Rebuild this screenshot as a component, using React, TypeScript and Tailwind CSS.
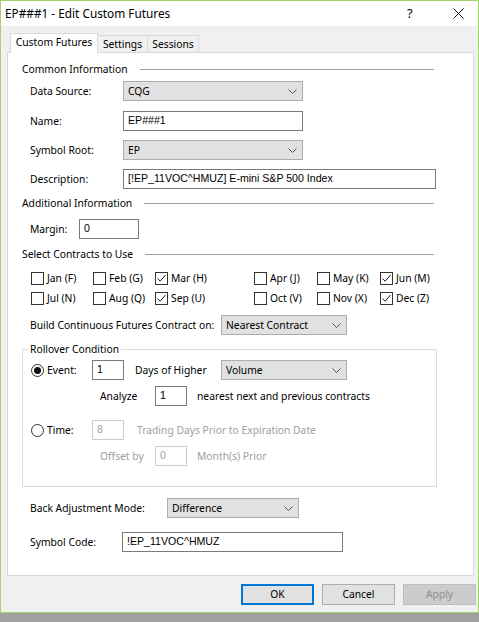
import React from 'react';

const ui = "font-['Noto_Sans','Open_Sans',sans-serif] text-[10.3px] text-[#000]";
const mono = "font-['Liberation_Sans','Arial',sans-serif] text-[10.6px]";

const Chevron = () => (
    <svg width="9" height="5" viewBox="0 0 9 5" className="mr-[5px] shrink-0">
        <path d="M0.5 0.5 L4.5 4.5 L8.5 0.5" fill="none" stroke="#555" strokeWidth="1" />
    </svg>
);

const Select = ({ w, value }: { w: number; value: string }) => (
    <div
        className="h-[20px] flex items-center justify-between border border-[#adadad] bg-[#e1e1e1] pl-[4px]"
        style={{ width: w }}
    >
        <span className="leading-none whitespace-nowrap">{value}</span>
        <Chevron />
    </div>
);

const TextBox = ({ w, value, disabled }: { w: number; value: string; disabled?: boolean }) => (
    <div
        className={`h-[20px] flex items-center pl-[4px] bg-white border whitespace-nowrap ${mono} ${
            disabled ? 'border-[#cccccc] text-[#a0a0a0]' : 'border-[#7a7a7a] text-black'
        }`}
        style={{ width: w }}
    >
        {value}
    </div>
);

const Check = ({ label, checked, w }: { label: string; checked?: boolean; w: number }) => (
    <div className="flex items-center h-[14px]" style={{ width: w }}>
        <div className="w-[13px] h-[13px] border border-[#333] bg-white flex items-center justify-center shrink-0">
            {checked && (
                <svg width="11" height="11" viewBox="0 0 11 11">
                    <path d="M1.5 5.5 L4.2 8.2 L9.5 2" fill="none" stroke="#222" strokeWidth="1" />
                </svg>
            )}
        </div>
        <span className="ml-[3px] leading-none whitespace-nowrap">{label}</span>
    </div>
);

const Radio = ({ label, checked }: { label: string; checked?: boolean }) => (
    <div className="flex items-center w-[61px]">
        <div className="w-[13px] h-[13px] rounded-full border border-[#333] bg-white flex items-center justify-center shrink-0">
            {checked && <div className="w-[7px] h-[7px] rounded-full bg-[#111]" />}
        </div>
        <span className="ml-[3px] leading-none">{label}</span>
    </div>
);

const Section = ({ title }: { title: string }) => (
    <div className="h-[18px] flex items-center ml-[14px] mr-[39px] gap-[12px]">
        <span className="leading-none whitespace-nowrap">{title}</span>
        <div className="flex-1 h-px bg-[#a0a0a0]" />
    </div>
);

const Field = ({ label, lw, children, mt }: { label: string; lw: number; children: React.ReactNode; mt: string }) => (
    <div className={`flex items-center ml-[22px] ${mt}`}>
        <span className="leading-none shrink-0 whitespace-nowrap" style={{ width: lw }}>{label}</span>
        {children}
    </div>
);

const Button = ({ label, primary, disabled }: { label: string; primary?: boolean; disabled?: boolean }) => (
    <div
        className={`w-[73px] h-[21px] flex items-center justify-center ${
            primary
                ? 'border-2 border-[#0078d7] bg-[#e1e1e1]'
                : disabled
                ? 'border border-[#bfbfbf] bg-[#cccccc] text-[#8c8c8c]'
                : 'border border-[#adadad] bg-[#e1e1e1]'
        }`}
    >
        {label}
    </div>
);

export default function App() {
    const row1 = [
        { l: 'Jan (F)', c: false, w: 62 },
        { l: 'Feb (G)', c: false, w: 62 },
        { l: 'Mar (H)', c: true, w: 99 },
        { l: 'Apr (J)', c: false, w: 63 },
        { l: 'May (K)', c: false, w: 63 },
        { l: 'Jun (M)', c: true, w: 70 },
    ];
    const row2 = [
        { l: 'Jul (N)', c: false, w: 62 },
        { l: 'Aug (Q)', c: false, w: 62 },
        { l: 'Sep (U)', c: true, w: 99 },
        { l: 'Oct (V)', c: false, w: 63 },
        { l: 'Nov (X)', c: false, w: 63 },
        { l: 'Dec (Z)', c: true, w: 70 },
    ];

    return (
        <div className={`w-[479px] h-[622px] bg-[#a0a0a0] flex flex-col ${ui}`}>
            <div className="h-[613px] border border-[#a6d26f] bg-[#f0f0f0] flex flex-col">
                {/* Title bar */}
                <div className="h-[25px] bg-white flex items-center pl-[4px] shrink-0 text-[11.8px]">
                    <span className="flex-1 leading-none">EP###1 - Edit Custom Futures</span>
                    <span className="w-[10px] text-[13px] leading-none mr-[36px]">?</span>
                    <svg width="11" height="11" viewBox="0 0 11 11" className="mr-[14px]">
                        <path d="M0.5 0.5 L10.5 10.5 M10.5 0.5 L0.5 10.5" stroke="#111" strokeWidth="1" />
                    </svg>
                </div>

                <div className="flex flex-col pl-[6px] pr-[4px] pt-[7px]">
                    {/* Tabs */}
                    <div className="flex items-end h-[19px] ml-[3px]">
                        <div className="relative z-10 w-[88px] h-[20px] -mb-px bg-white border-x border-t border-[#d9d9d9] flex items-center justify-center">
                            <span className="leading-none -mt-[2px]">Custom Futures</span>
                        </div>
                        <div className="w-[50px] h-[17px] bg-[#f0f0f0] border-r border-t border-[#d9d9d9] flex items-center justify-center">
                            <span className="leading-none">Settings</span>
                        </div>
                        <div className="w-[51px] h-[17px] bg-[#f0f0f0] border-r border-t border-[#d9d9d9] flex items-center justify-center">
                            <span className="leading-none">Sessions</span>
                        </div>
                    </div>

                    {/* Panel */}
                    <div className="w-[467px] h-[524px] bg-white border border-[#d9d9d9] flex flex-col">
                        <div className="mt-[7px]">
                            <Section title="Common Information" />
                        </div>
                        <Field label="Data Source:" lw={93} mt="mt-[3px]">
                            <Select w={180} value="CQG" />
                        </Field>
                        <Field label="Name:" lw={93} mt="mt-[10px]">
                            <TextBox w={180} value="EP###1" />
                        </Field>
                        <Field label="Symbol Root:" lw={93} mt="mt-[9px]">
                            <Select w={180} value="EP" />
                        </Field>
                        <Field label="Description:" lw={93} mt="mt-[9px]">
                            <TextBox w={313} value="[!EP_11VOC^HMUZ] E-mini S&P 500 Index" />
                        </Field>

                        <div className="mt-[5px]">
                            <Section title="Additional Information" />
                        </div>
                        <Field label="Margin:" lw={49} mt="mt-[7px]">
                            <TextBox w={60} value="0" />
                        </Field>

                        <div className="mt-[6px]">
                            <Section title="Select Contracts to Use" />
                        </div>
                        <div className="flex ml-[23px] mt-[8px]">
                            {row1.map(c => (
                                <Check key={c.l} label={c.l} checked={c.c} w={c.w} />
                            ))}
                        </div>
                        <div className="flex ml-[23px] mt-[6px]">
                            {row2.map(c => (
                                <Check key={c.l} label={c.l} checked={c.c} w={c.w} />
                            ))}
                        </div>

                        <Field label="Build Continuous Futures Contract on:" lw={191} mt="mt-[10px]">
                            <Select w={126} value="Nearest Contract" />
                        </Field>

                        {/* Rollover group */}
                        <fieldset className="mt-[6px] ml-[14px] w-[415px] h-[146px] border border-[#dcdcdc] p-0 m-0 min-w-0">
                            <legend className="ml-[5px] px-[2px] h-[16px] leading-[16px]">Rollover Condition</legend>
                            <div className="flex items-center ml-[8px] mt-[3px]">
                                <Radio label="Event:" checked />
                                <TextBox w={32} value="1" />
                                <span className="ml-[11px] w-[86px] leading-none">Days of Higher</span>
                                <Select w={126} value="Volume" />
                            </div>
                            <div className="flex items-center ml-[77px] mt-[6px]">
                                <span className="w-[55px] leading-none">Analyze</span>
                                <TextBox w={32} value="1" />
                                <span className="ml-[10px] leading-none">nearest next and previous contracts</span>
                            </div>
                            <div className="flex items-center ml-[8px] mt-[14px]">
                                <Radio label="Time:" />
                                <TextBox w={32} value="8" disabled />
                                <span className="ml-[13px] leading-none text-[#a0a0a0]">Trading Days Prior to Expiration Date</span>
                            </div>
                            <div className="flex items-center ml-[77px] mt-[6px] text-[#a0a0a0]">
                                <span className="w-[55px] leading-none">Offset by</span>
                                <TextBox w={32} value="0" disabled />
                                <span className="ml-[10px] leading-none">Month(s) Prior</span>
                            </div>
                        </fieldset>

                        <Field label="Back Adjustment Mode:" lw={137} mt="mt-[11px]">
                            <Select w={132} value="Difference" />
                        </Field>
                        <Field label="Symbol Code:" lw={92} mt="mt-[14px]">
                            <TextBox w={221} value="!EP_11VOC^HMUZ" />
                        </Field>
                    </div>

                    {/* Buttons */}
                    <div className="flex justify-end gap-[8px] mt-[8px] -mr-[2px]">
                        <Button label="OK" primary />
                        <Button label="Cancel" />
                        <Button label="Apply" disabled />
                    </div>
                </div>
            </div>
        </div>
    );
}
